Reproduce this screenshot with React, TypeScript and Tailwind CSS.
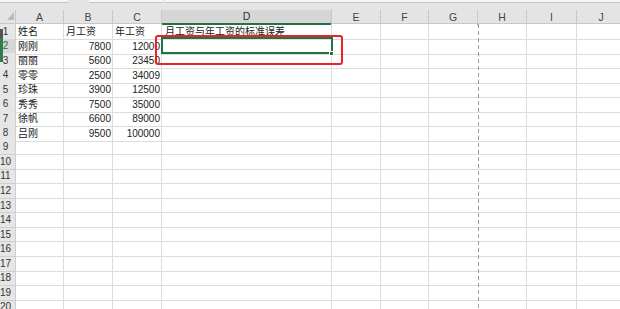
import React from "react";

const COLS = [
  { l: "A", w: 48 },
  { l: "B", w: 49 },
  { l: "C", w: 49 },
  { l: "D", w: 170 },
  { l: "E", w: 49 },
  { l: "F", w: 48 },
  { l: "G", w: 49 },
  { l: "H", w: 49 },
  { l: "I", w: 50 },
  { l: "J", w: 49 },
];

const DATA: (string | undefined)[][] = [
  ["姓名", "月工资", "年工资", "月工资与年工资的标准误差"],
  ["刚刚", "7800", "12000"],
  ["丽丽", "5600", "23450"],
  ["零零", "2500", "34009"],
  ["珍珠", "3900", "12500"],
  ["秀秀", "7500", "35000"],
  ["徐帆", "6600", "89000"],
  ["吕刚", "9500", "100000"],
];

const gridCols = "grid grid-cols-[16px_48px_49px_49px_170px_49px_48px_49px_49px_50px_49px]";
const font = "font-['Liberation_Sans','Noto_Sans_CJK_SC',sans-serif]";

export default function App() {
  const rows = Array.from({ length: 20 }, (_, i) => i + 1);
  return (
    <div className={`relative w-[620px] h-[309px] overflow-hidden bg-white ${font} text-[10px] text-[#222]`}>
      {/* top strip (formula bar bottom) */}
      <div className="flex h-[3px] bg-[#e4e4e4]">
        <div className="w-[68px] border-b border-[#c4c4c4] bg-[#f7f7f7]" />
        <div className="w-[21px]" />
        <div className="w-[74px] border-b border-[#c4c4c4] bg-[#f7f7f7]" />
        <div className="w-[2px]" />
        <div className="flex-1 border-b border-[#c4c4c4] bg-[#f7f7f7]" />
      </div>
      {/* header band */}
      <div className="h-[7px] bg-[#e4e4e4]" />
      <div className={`${gridCols} h-[14px] bg-[#e4e4e4] border-b border-[#c8c8c8]`}>
        <div className="relative border-r border-[#c8c8c8]">
          <svg className="absolute left-[7px] top-[2px]" width="7" height="8" viewBox="0 0 7 8">
            <polygon points="7,0 7,8 0,8" fill="#b9b9b9" />
          </svg>
        </div>
        {COLS.map((c) =>
          c.l === "D" ? (
            <div
              key={c.l}
              className="flex items-center justify-center bg-[#d6d6d6] border-r border-[#c8c8c8] border-b-2 border-b-[#217346] text-[#333] h-[15px] text-[10.5px]"
            >
              {c.l}
            </div>
          ) : (
            <div key={c.l} className="flex items-center justify-center border-r border-[#c8c8c8] text-[#444] text-[10.5px]">
              {c.l}
            </div>
          )
        )}
      </div>
      {/* body */}
      <div className="flex flex-col">
        {rows.map((r) => {
          const d = DATA[r - 1] || [];
          return (
            <div key={r} className={`${gridCols} h-[14.57px]`}>
              <div
                className={`flex items-center border-r border-b border-[#cfcfcf] ${
                  r === 2 ? "bg-[#d6d6d6] text-[#217346]" : "bg-[#e6e6e6] text-[#333]"
                }`}
              >
                <span className="w-[11px] text-center leading-none">{r}</span>
              </div>
              {COLS.map((c, ci) => {
                const v = d[ci];
                const isNum = ci === 1 || ci === 2 ? r > 1 : false;
                return (
                  <div
                    key={c.l}
                    className={`flex items-center whitespace-nowrap border-b border-[#dcdcdc] ${
                      ci === 3 && r === 1 ? "overflow-visible" : "overflow-visible"
                    } ${ci === 6 ? "border-r-0" : "border-r border-[#dcdcdc]"} ${
                      isNum ? "justify-end pr-[1px]" : "pl-[2px]"
                    } ${ci === 3 && r === 1 ? "pl-[3px] text-[10px]" : ""}`}
                  >
                    {v}
                  </div>
                );
              })}
            </div>
          );
        })}
      </div>

      {/* page-break dashed line */}
      <div className="absolute left-[478px] top-[24px] w-[1px] h-[290px] bg-[repeating-linear-gradient(to_bottom,#9c9c9c_0px,#9c9c9c_4px,transparent_4px,transparent_7px)]" />

      {/* left selection marker */}
      <div className="absolute left-0 top-[29px] w-[3px] h-[9px] bg-[#555]" />
      <div className="absolute left-0 top-[38px] w-[3px] h-[24px] bg-[#2f7d4f]" />

      {/* selected cell D2 */}
      <div className="absolute left-[161px] top-[37px] w-[172px] h-[17px] border-2 border-[#217346]" />
      <div className="absolute left-[329px] top-[51px] w-[5px] h-[5px] bg-[#217346] border border-white" />

      {/* red annotation box */}
      <div className="absolute left-[155px] top-[35px] w-[188px] h-[30px] border-2 border-[#ec2226] rounded-[3px]" />
    </div>
  );
}
